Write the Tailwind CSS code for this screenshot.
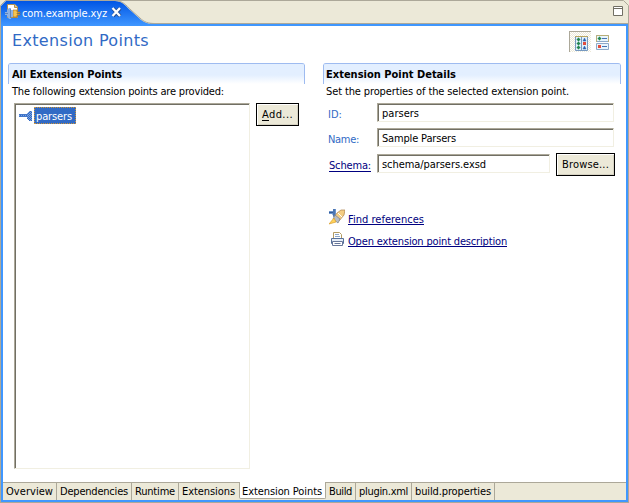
<!DOCTYPE html>
<html lang="en">
<head>
<meta charset="utf-8">
<title>com.example.xyz</title>
<script src="https://cdn.jsdelivr.net/npm/@tailwindcss/browser@4"></script>
</head>
<body class="w-[629px] h-[503px] overflow-hidden bg-[#ece9d8] font-['DejaVu_Sans_Condensed','DejaVu_Sans',sans-serif] [font-stretch:condensed] text-[11px] leading-[13px] text-black whitespace-nowrap">
<div class="relative w-[629px] h-[503px] flex flex-col">
  <header class="relative h-[26px] shrink-0">
    <svg class="absolute left-0 top-0" width="629" height="26" viewBox="0 0 629 26">
      <defs><linearGradient id="tab" x1="0" y1="0" x2="0" y2="1"><stop offset="0" stop-color="#0055e5"/><stop offset="1" stop-color="#3f97ff"/></linearGradient></defs>
      <path d="M0 0H629V26H0Z" fill="#ece9d8"/>
      <path d="M0.5 26V5.500L5.500 0.500H623.500L628.500 5.500V26" fill="none" stroke="#aca899"/>
      <path d="M150 23.500H628" stroke="#aca899"/>
      <path d="M1 26V6L6 1H115C122 1 125 5 130 10L139 18C143 22 146 23.500 154 24H628V26Z" fill="url(#tab)"/>
      <path d="M115 0.500C123 1 126 5 131 10L140 18C144 22 148 23.500 155 23.500" fill="none" stroke="#aca899"/>
      <path d="M150 24H628V26H150Z" fill="#3f97ff"/>
    </svg>
    <div class="relative flex items-start">
      <svg class="ml-[5px] mt-[3px]" width="16" height="16" viewBox="0 0 16 16">
        <path d="M2.500 1.500H10L12.500 4V14.500H2.500Z" fill="#fff" stroke="#b2904f"/><path d="M9.500 1.500V4.500H12.500" fill="#f3ce70" stroke="#b2904f"/>
        <path d="M8 7H12V9H15V10H12V11H15V12H12V14H8Z" fill="#f5c451" stroke="#a06a20" stroke-width=".6"/>
        <path d="M0 9H2V7L4 5H6V7H8V14H6V16H4L2 13V12H0Z" fill="#8fb2e2"/><path d="M5.500 6V15M0 10.500H3" stroke="#5f86bf"/>
      </svg>
      <span data-w="85" class="ml-px mt-[7px] text-white">com.example.xyz</span>
      <svg class="ml-[4px] mt-[7px]" width="11" height="11" viewBox="0 0 11 11"><path d="M2 1.500L9 9M9 1.500L2 9" stroke="#244e92" stroke-width="4"/><path d="M1.500 1L9 9M9 1L1.500 9" stroke="#fff" stroke-width="2.300"/></svg>
    </div>
    <svg class="absolute left-[613px] top-[6px]" width="10" height="10" viewBox="0 0 10 10"><path d="M.5.5H9.500V9.500H.5ZM.5 2.500H9.500" fill="#fff" stroke="#716f64"/></svg>
  </header>

  <div class="flex-1 min-h-0 flex flex-col bg-white border-x border-[#aca899]">
   <div class="flex-1 min-h-0 flex flex-col border-x-2 border-b-2 border-[#3f97ff]">
    <div class="h-[37px] shrink-0 flex items-start">
      <h1 class="ml-[9px] mt-[5px] w-[557px] font-['DejaVu_Sans',sans-serif] [font-stretch:normal] text-[16px] leading-[20px] text-[#316ac5]"><span data-w="137">Extension Points</span></h1>
      <div class="mt-[5px] w-[22px] h-[21px] border-t border-l border-[#aca899] bg-[repeating-conic-gradient(#ece9d8_0_25%,#fff_0_50%)] bg-[length:2px_2px]">
        <svg class="ml-[5px] mt-[4px]" width="13" height="15" viewBox="0 0 13 15"><path d="M.5.5H12.500V14.500H.5ZM6.500 1V14" fill="#e2f1fb" stroke="#7799c0"/><path d="M0 .5H13" stroke="#b9a661"/><path d="M2 3h3v1h-3zM3 2h1v3h-1zM2 7h3v1h-3zM3 6h1v3h-1zM2 11h3v1h-3zM3 10h1v3h-1z" stroke="#278653" stroke-width=".6" fill="#278653"/><path d="M9.500 2L11 5H8ZM9.500 10L11 13H8Z" fill="#2b60ae" stroke="#2b60ae" stroke-width=".5"/><path d="M8 6h3v3H8z" fill="#e34d3e"/></svg>
      </div>
      <svg class="ml-[5px] mt-[9px]" width="13" height="15" viewBox="0 0 13 15"><path d="M.5.5H12.500V6.500H.5ZM.5 8.500H12.500V14.500H.5Z" fill="#e8f5fd" stroke="#8da9c9"/><path d="M.5 7V.5H12.500V7" fill="none" stroke="#b9ae78"/><path d="M2 3h3v1h-3zM3 2h1v3h-1z" stroke="#278653" stroke-width=".6" fill="#278653"/><path d="M2 10h3v3H2z" fill="#e34d3e"/><path d="M6 3.500H11M6 11.500H11" stroke="#4773b1"/></svg>
    </div>

    <main class="flex-1 min-h-0 flex items-start pl-[5px]">
      <section class="w-[297px]">
        <div class="relative h-[21px] pl-[4px] pt-[4px] bg-linear-to-b from-[#e3efff] from-55% to-white rounded-t-[3px] border-t border-[#9ebbf0]">
          <i class="absolute left-0 top-[1px] h-[19px] w-px bg-[#9ebbf0]"></i><i class="absolute right-0 top-[1px] h-[19px] w-px bg-[#9ebbf0]"></i>
          <span data-w="110" class="font-bold">All Extension Points</span>
        </div>
        <p class="pl-[4px] mt-px h-[18px]"><span data-w="212">The following extension points are provided:</span></p>
        <div class="flex items-start pl-[6px]">
          <div class="w-[236px] h-[366px] border border-t-[#aca899] border-l-[#aca899] border-r-[#f1efe2] border-b-[#f1efe2]">
            <div class="h-full border-t border-l border-[#716f64] flex items-start pt-[2px] pl-[3px]">
              <svg class="mt-[3px]" width="15" height="13" viewBox="0 0 15 13"><defs><pattern id="dots" width="2" height="2" patternUnits="userSpaceOnUse"><path d="M0 0h2v2H0z" fill="#7ba2df"/><path d="M0 0h1v1H0zM1 1h1v1H1z" fill="#316ac5"/></pattern></defs><path d="M0 4H8V3H9V2H10V1H13V11H10V10H9V9H8V7H0Z" fill="url(#dots)"/><path d="M0 4.500H9M0 6.500H9" stroke="#4377c9"/></svg>
              <div class="w-[42px] h-[17px] bg-[#316ac5] text-white border border-dotted border-[#ce953a] pt-[2px]"><span data-w="36" class="ml-px">parsers</span></div>
            </div>
          </div>
          <button class="ml-[6px] w-[43px] h-[23px] border border-black bg-[#ece9d8] shadow-[inset_1px_1px_#fff,inset_-1px_-1px_#d6d2c2]"><span data-w="31"><u class="underline-offset-2">A</u>dd...</span></button>
        </div>
      </section>

      <section class="ml-[18px] w-[298px]">
        <div class="relative h-[21px] pl-[3px] pt-[4px] bg-linear-to-b from-[#e3efff] from-55% to-white rounded-t-[3px] border-t border-[#9ebbf0]">
          <i class="absolute left-0 top-[1px] h-[19px] w-px bg-[#9ebbf0]"></i><i class="absolute right-0 top-[1px] h-[19px] w-px bg-[#9ebbf0]"></i>
          <span data-w="130" class="font-bold">Extension Point Details</span>
        </div>
        <p class="pl-[3px] mt-px h-[18px]"><span data-w="243">Set the properties of the selected extension point.</span></p>
        <div class="flex h-[25px] items-start">
          <div class="w-[54px] pl-[5px] pt-[5px] text-[#316ac5]"><span data-w="14">ID:</span></div>
          <div class="w-[237px] h-[19px] border border-t-[#aca899] border-l-[#aca899] border-r-[#f1efe2] border-b-[#f1efe2]"><div class="h-full border-t border-l border-[#716f64] pl-[3px] pt-[2px]"><span data-w="37">parsers</span></div></div>
        </div>
        <div class="flex h-[26px] items-start">
          <div class="w-[54px] pl-[5px] pt-[5px] text-[#316ac5]"><span data-w="31">Name:</span></div>
          <div class="w-[237px] h-[19px] border border-t-[#aca899] border-l-[#aca899] border-r-[#f1efe2] border-b-[#f1efe2]"><div class="h-full border-t border-l border-[#716f64] pl-[3px] pt-[2px]"><span data-w="74">Sample Parsers</span></div></div>
        </div>
        <div class="flex h-[55px] items-start">
          <div class="w-[54px] pl-[6px] pt-[5px] text-[#000080]"><span data-w="42" class="inline-block h-[13px] border-b border-[#000080]">Schema:</span></div>
          <div class="w-[173px] h-[19px] border border-t-[#aca899] border-l-[#aca899] border-r-[#f1efe2] border-b-[#f1efe2]"><div class="h-full border-t border-l border-[#716f64] pl-[3px] pt-[2px]"><span data-w="104">schema/parsers.exsd</span></div></div>
          <button class="ml-[6px] -mt-px w-[59px] h-[23px] border border-black bg-[#ece9d8] shadow-[inset_1px_1px_#fff,inset_-1px_-1px_#d6d2c2]"><span data-w="47">Browse...</span></button>
        </div>
        <div class="flex h-[22px] items-start pl-[6px]">
          <svg width="16" height="16" viewBox="0 0 16 16">
            <path d="M0 2H4V0H7V8H5L3 5H0Z" fill="#6b93cd"/><path d="M5 0V8M0 3.500H4" stroke="#315b99"/>
            <path d="M8 4L12 1H16L15 6L10 12L5 8Z" fill="#f4cd83" stroke="#ad824d" stroke-width=".7"/>
            <path d="M6 6L11 10L9 14L4 10Z" fill="#b8bec7" stroke="#777e8b" stroke-width=".7"/><path d="M5 9L7 13L0 15Z" fill="#ffd35b" stroke="#d99d2c" stroke-width=".7"/><path d="M9 4L13 8" stroke="#fff"/>
          </svg>
          <a class="ml-[3px] mt-[4px] text-[#000080] border-b border-[#000080] h-[12px] leading-[13px]"><span data-w="76">Find references</span></a>
        </div>
        <div class="flex items-start pl-[6px]">
          <svg class="ml-[2px] mt-px" width="13" height="14" viewBox="0 0 13 14"><path d="M2.500 7V.5H8.500L10.500 2.500V7" fill="#fff" stroke="#b29b63"/><path d="M4 2.500H8M4 4.500H9" stroke="#8ba6c9"/><path d="M.5 6.500H12.500V11.500H.5Z" fill="#e5edf7" stroke="#56719b"/><path d="M1.500 9.500H11.500V13.500H1.500ZM3.500 11.500H9.500" fill="#fff" stroke="#68779a"/></svg>
          <a class="ml-[4px] mt-[4px] text-[#000080] border-b border-[#000080] h-[12px] leading-[13px]"><span data-w="159">Open extension point description</span></a>
        </div>
      </section>
    </main>

    <nav class="h-[18px] shrink-0 flex bg-[#ece9d8]">
      <div class="w-[54px] border-t border-r border-[#aca899] pl-[3px] pt-[2px]"><span data-w="47">Overview</span></div>
      <div class="w-[75px] border-t border-r border-[#aca899] pl-[3px] pt-[2px]"><span data-w="68">Dependencies</span></div>
      <div class="w-[47px] border-t border-r border-[#aca899] pl-[3px] pt-[2px]"><span data-w="40">Runtime</span></div>
      <div class="w-[60px] border-t border-[#aca899] pl-[3px] pt-[2px]"><span data-w="53">Extensions</span></div>
      <div class="w-[87px] h-[17px] border-x border-b border-[#aca899] rounded-b-[2px] bg-white pl-[2px] pt-[3px]"><span data-w="80">Extension Points</span></div>
      <div class="w-[30px] border-t border-r border-[#aca899] pl-[3px] pt-[2px]"><span data-w="23">Build</span></div>
      <div class="w-[56px] border-t border-r border-[#aca899] pl-[3px] pt-[2px]"><span data-w="49">plugin.xml</span></div>
      <div class="w-[83px] border-t border-r border-[#aca899] pl-[3px] pt-[2px]"><span data-w="76">build.properties</span></div>
      <div class="flex-1 border-t border-[#aca899]"></div>
    </nav>
   </div>
  </div>
  <div class="h-px shrink-0 bg-[#aca899]"></div>
</div>
<script>
// Spread each label's letters so that it fills its nominal width.
function fitLabels() {
  document.querySelectorAll('span[data-w]').forEach(function (s) {
    s.style.letterSpacing = '0px';
    var r = document.createRange();
    r.selectNodeContents(s);
    var n = s.textContent.length;
    s.style.letterSpacing = ((+s.dataset.w - r.getBoundingClientRect().width) / n) + 'px';
  });
}
window.addEventListener('load', function () {
  fitLabels();
  document.fonts.ready.then(fitLabels);
  requestAnimationFrame(fitLabels);
});
</script>
</body>
</html>
